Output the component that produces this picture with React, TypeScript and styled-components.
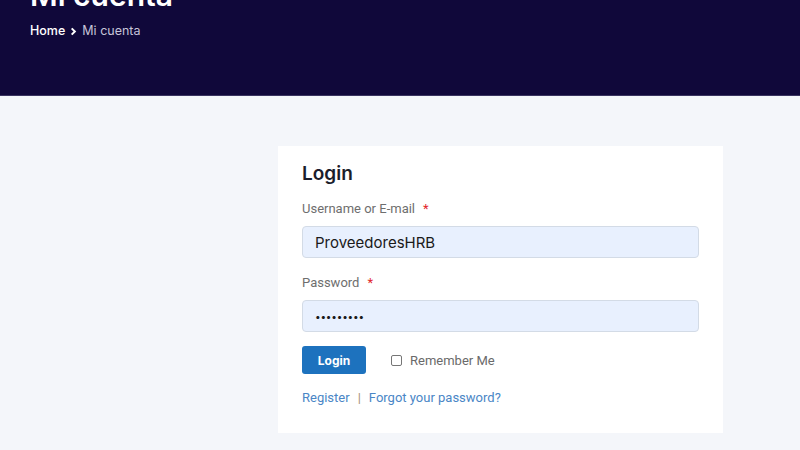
import React from "react";
import styled, { createGlobalStyle } from "styled-components";

const Global = createGlobalStyle`
  html, body { margin: 0; padding: 0; background: #f4f6fa; }
  body { font-family: Inter, "Noto Sans", sans-serif; overflow: hidden; }
  * { box-sizing: border-box; }
`;

const Page = styled.div`
  width: 800px;
  height: 450px;
  overflow: hidden;
  display: flex;
  flex-direction: column;
  background: #f4f6fa;
`;

const Hero = styled.header`
  height: 96px;
  flex: none;
  background: #10083a;
  padding-left: 30px;
  display: flex;
  flex-direction: column;
  overflow: hidden;
  border-bottom: 1px solid #3a3460;
`;

const Title = styled.h1`
  margin: -25px 0 0;
  font-family: Inter, sans-serif;
  font-weight: 600;
  font-size: 30px;
  line-height: 40px;
  color: #ffffff;
`;

const Crumbs = styled.nav`
  margin-top: 6px;
  display: flex;
  align-items: center;
  gap: 4px;
  font-size: 12.5px;
  line-height: 20px;
  font-family: Inter, sans-serif;
`;

const Crumb = styled.span<{ $current?: boolean }>`
  color: ${(p) => (p.$current ? "#c6c3d8" : "#ffffff")};
  font-weight: ${(p) => (p.$current ? 400 : 500)};
`;

const Main = styled.main`
  flex: 1;
  padding: 50px 0 0 278px;
`;

const Card = styled.section`
  width: 445px;
  background: #ffffff;
  padding: 16px 24px 26px;
  display: flex;
  flex-direction: column;
`;

const CardTitle = styled.h2`
  margin: 0 0 13px;
  font-family: Inter, sans-serif;
  font-weight: 600;
  font-size: 19px;
  line-height: 24px;
  color: #1b1d2b;
`;

const Field = styled.div`
  display: flex;
  flex-direction: column;
  margin-bottom: 15px;
`;

const Label = styled.label`
  font-family: Roboto, sans-serif;
  font-size: 13px;
  line-height: 20px;
  color: #6e6e6e;
  margin-bottom: 7px;
`;

const Required = styled.span`
  color: #e2262b;
  margin-left: 8px;
`;

const Input = styled.input`
  height: 32px;
  width: 100%;
  border: 1px solid #d3dbe6;
  border-radius: 4px;
  background: #e8f0fe;
  padding: 0 12px;
  font-family: Inter, sans-serif;
  font-size: 15px;
  color: #1a1a1a;
  outline: none;
  &[type="password"] {
    font-size: 10px;
    letter-spacing: -0.2px;
  }
`;

const ActionRow = styled.div`
  display: flex;
  align-items: center;
  margin-top: -1px;
`;

const LoginButton = styled.button`
  width: 64px;
  height: 28px;
  border: none;
  border-radius: 3px;
  background: #1d72be;
  color: #ffffff;
  font-family: Inter, sans-serif;
  font-weight: 700;
  font-size: 12px;
  cursor: pointer;
`;

const Remember = styled.label`
  margin-left: 25px;
  display: flex;
  align-items: center;
  gap: 8px;
  font-family: Roboto, sans-serif;
  font-size: 13px;
  color: #6a6a6a;
`;

const Check = styled.span`
  width: 11px;
  height: 11px;
  border: 1px solid #767676;
  border-radius: 2px;
  background: #ffffff;
  display: inline-block;
`;

const Links = styled.div`
  margin-top: 15px;
  display: flex;
  align-items: center;
  gap: 8px;
  font-family: Roboto, sans-serif;
  font-size: 13px;
  line-height: 18px;
`;

const Link = styled.a`
  color: #4a86c6;
  text-decoration: none;
`;

const Sep = styled.span`
  color: #a38f72;
`;

export default function App() {
  return (
    <Page>
      <Global />
      <Hero>
        <Title>Mi cuenta</Title>
        <Crumbs>
          <Crumb>Home</Crumb>
          <svg width="9" height="9" viewBox="0 0 10 10">
            <path d="M3 1.5 L6.5 5 L3 8.5" fill="none" stroke="#ffffff" strokeWidth="2.2" />
          </svg>
          <Crumb $current>Mi cuenta</Crumb>
        </Crumbs>
      </Hero>
      <Main>
        <Card>
          <CardTitle>Login</CardTitle>
          <Field>
            <Label>
              Username or E-mail<Required>*</Required>
            </Label>
            <Input type="text" defaultValue="ProveedoresHRB" />
          </Field>
          <Field>
            <Label>
              Password<Required>*</Required>
            </Label>
            <Input type="password" defaultValue="123456789" />
          </Field>
          <ActionRow>
            <LoginButton>Login</LoginButton>
            <Remember>
              <Check />
              Remember Me
            </Remember>
          </ActionRow>
          <Links>
            <Link href="#">Register</Link>
            <Sep>|</Sep>
            <Link href="#">Forgot your password?</Link>
          </Links>
        </Card>
      </Main>
    </Page>
  );
}
